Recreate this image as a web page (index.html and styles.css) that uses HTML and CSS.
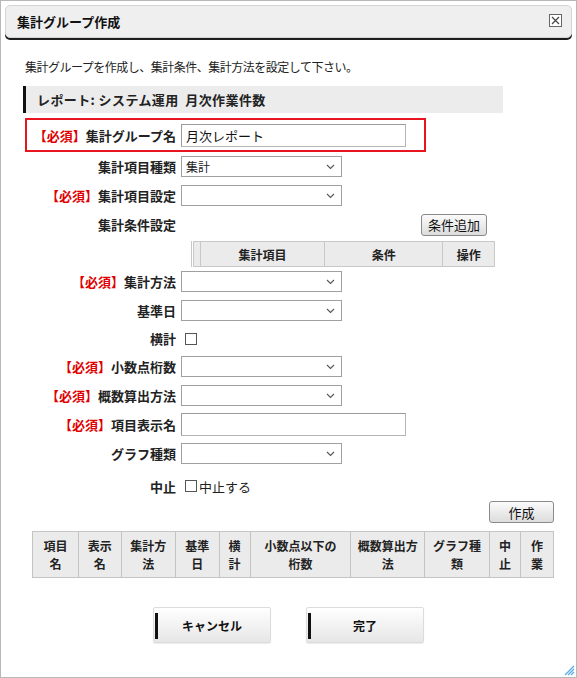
FILE: index.html
```html
<!DOCTYPE html>
<html lang="ja">
<head>
  <meta charset="UTF-8">
  <title>集計グループ作成</title>
  <link rel="stylesheet" href="styles.css">
</head>
<body>

  <!-- ダイアログ -->
  <div class="dialog">
    <div class="dialog-header">
      <span class="dialog-title">集計グループ作成</span>
      <span class="close-btn">
        <svg width="13" height="13" viewBox="0 0 13 13">
          <rect x="0.5" y="0.5" width="12" height="12" fill="#fff" stroke="#666"/>
          <path d="M3 3 L10 10 M10 3 L3 10" stroke="#444" stroke-width="1.2"/>
        </svg>
      </span>
    </div>

    <div class="dialog-body">
      <p class="lead">集計グループを作成し、集計条件、集計方法を設定して下さい。</p>

      <div class="report-bar">レポート: システム運用&nbsp;&nbsp;月次作業件数</div>

      <!-- 入力フォーム -->
      <div class="form">
        <div class="row row-focus">
          <label class="label"><span class="req">【必須】</span>集計グループ名</label>
          <input class="text-input" type="text" value="月次レポート">
        </div>

        <div class="row">
          <label class="label">集計項目種類</label>
          <span class="select"><span class="select-value">集計</span><svg class="chev" width="9" height="6" viewBox="0 0 9 6"><path d="M1 1 L4.5 4.5 L8 1" fill="none" stroke="#555" stroke-width="1.1"/></svg></span>
        </div>

        <div class="row">
          <label class="label"><span class="req">【必須】</span>集計項目設定</label>
          <span class="select"><span class="select-value"></span><svg class="chev" width="9" height="6" viewBox="0 0 9 6"><path d="M1 1 L4.5 4.5 L8 1" fill="none" stroke="#555" stroke-width="1.1"/></svg></span>
        </div>

        <div class="row">
          <label class="label">集計条件設定</label>
          <span class="spacer"></span>
          <button class="btn btn-add">条件追加</button>
        </div>

        <table class="cond-table">
          <tr>
            <th class="col-blank"></th>
            <th class="col-item">集計項目</th>
            <th class="col-cond">条件</th>
            <th class="col-op">操作</th>
          </tr>
        </table>

        <div class="row">
          <label class="label"><span class="req">【必須】</span>集計方法</label>
          <span class="select"><span class="select-value"></span><svg class="chev" width="9" height="6" viewBox="0 0 9 6"><path d="M1 1 L4.5 4.5 L8 1" fill="none" stroke="#555" stroke-width="1.1"/></svg></span>
        </div>

        <div class="row">
          <label class="label">基準日</label>
          <span class="select"><span class="select-value"></span><svg class="chev" width="9" height="6" viewBox="0 0 9 6"><path d="M1 1 L4.5 4.5 L8 1" fill="none" stroke="#555" stroke-width="1.1"/></svg></span>
        </div>

        <div class="row row-short">
          <label class="label">横計</label>
          <span class="check"></span>
        </div>

        <div class="row">
          <label class="label"><span class="req">【必須】</span>小数点桁数</label>
          <span class="select"><span class="select-value"></span><svg class="chev" width="9" height="6" viewBox="0 0 9 6"><path d="M1 1 L4.5 4.5 L8 1" fill="none" stroke="#555" stroke-width="1.1"/></svg></span>
        </div>

        <div class="row">
          <label class="label"><span class="req">【必須】</span>概数算出方法</label>
          <span class="select"><span class="select-value"></span><svg class="chev" width="9" height="6" viewBox="0 0 9 6"><path d="M1 1 L4.5 4.5 L8 1" fill="none" stroke="#555" stroke-width="1.1"/></svg></span>
        </div>

        <div class="row">
          <label class="label"><span class="req">【必須】</span>項目表示名</label>
          <input class="text-input" type="text" value="">
        </div>

        <div class="row">
          <label class="label">グラフ種類</label>
          <span class="select"><span class="select-value"></span><svg class="chev" width="9" height="6" viewBox="0 0 9 6"><path d="M1 1 L4.5 4.5 L8 1" fill="none" stroke="#555" stroke-width="1.1"/></svg></span>
        </div>

        <div class="row row-stop">
          <label class="label">中止</label>
          <span class="check"></span>
          <span class="check-text">中止する</span>
        </div>
      </div>

      <!-- 作成ボタン -->
      <div class="create-line">
        <button class="btn btn-create">作成</button>
      </div>

      <!-- 集計グループ一覧 -->
      <table class="summary-table">
        <tr>
          <th style="width:46px">項目<br>名</th>
          <th style="width:43px">表示<br>名</th>
          <th style="width:54px">集計方<br>法</th>
          <th style="width:44px">基準<br>日</th>
          <th style="width:31px">横<br>計</th>
          <th style="width:101px">小数点以下の<br>桁数</th>
          <th style="width:74px">概数算出方<br>法</th>
          <th style="width:65px">グラフ種<br>類</th>
          <th style="width:31px">中<br>止</th>
          <th style="width:33px">作<br>業</th>
        </tr>
      </table>

      <!-- 下部ボタン -->
      <div class="footer-buttons">
        <button class="big-btn">キャンセル</button>
        <button class="big-btn">完了</button>
      </div>
    </div>

    <svg class="grip" width="12" height="12" viewBox="0 0 12 12">
      <path d="M11 2 L2 11 M11 5 L5 11 M11 8 L8 11" stroke="#5aaae6" stroke-width="1.3"/>
    </svg>
  </div>

</body>
</html>
```

FILE: styles.css
```css
/* 全体 */
body {
  margin: 0;
  background-color: #ffffff;
  font-family: "Noto Sans CJK JP", "Liberation Sans", sans-serif;
  font-size: 12px;
  color: #222;
}

/* ダイアログ枠 */
.dialog {
  position: relative;
  width: 577px;
  height: 678px;
  border: 1px solid #b8b8b8;
  box-sizing: border-box;
  background-color: #fff;
}

/* ヘッダー */
.dialog-header {
  display: flex;
  align-items: center;
  justify-content: space-between;
  height: 33px;
  margin: 4px 4px 0 4px;
  padding: 0 9px 0 11px;
  border: 1px solid #d4d4d4;
  border-radius: 5px;
  background-color: #efefef;
  box-shadow: 0 2px 0 #1e1e1e;
  box-sizing: border-box;
}

.dialog-title {
  font-size: 13px;
  font-weight: bold;
  color: #111;
}

.close-btn {
  display: flex;
  margin-top: -2px;
}

/* 本文 */
.dialog-body {
  padding: 0 22px;
}

.lead {
  margin: 21px 0 0 2px;
  line-height: 16px;
  letter-spacing: -0.5px;
  color: #222;
}

.report-bar {
  width: 480px;
  height: 27px;
  margin-top: 11px;
  padding-left: 11px;
  border-left: 3px solid #111;
  background-color: #ececec;
  box-sizing: border-box;
  display: flex;
  align-items: center;
  font-weight: bold;
  font-size: 13px;
  letter-spacing: 0.4px;
}

/* フォーム */
.form {
  margin-top: 5px;
}

.row {
  display: flex;
  align-items: center;
  height: 29px;
  padding-left: 2px;
}

.row-short {
  height: 27px;
}

.row-stop {
  height: 32px;
  padding-top: 4px;
  box-sizing: border-box;
}

.row-focus {
  width: 401px;
  height: 34px;
  padding-left: 0;
  margin-left: 2px;
  border: 2px solid #e8141e;
  box-sizing: border-box;
}

.label {
  width: 151px;
  margin-right: 5px;
  text-align: right;
  font-size: 13px;
  font-weight: bold;
  color: #222;
  white-space: nowrap;
}

.row-focus .label {
  width: 149px;
}

.req {
  color: #e00000;
}

.text-input {
  width: 225px;
  height: 23px;
  padding: 0 4px;
  border: 1px solid #9a9a9a;
  border-right-color: #b5b5b5;
  border-bottom-color: #b5b5b5;
  box-sizing: border-box;
  font-family: inherit;
  font-size: 13px;
  color: #111;
  outline: none;
}

/* セレクト */
.select {
  position: relative;
  display: flex;
  align-items: center;
  width: 161px;
  height: 21px;
  padding-left: 4px;
  border: 1px solid #a0a0a0;
  box-sizing: border-box;
  background-color: #fff;
  font-size: 12px;
}

.chev {
  position: absolute;
  right: 6px;
  top: 7px;
}

.spacer {
  flex: 1;
}

/* ボタン */
.btn {
  height: 22px;
  padding: 0;
  border: 1px solid #8a8a8a;
  border-radius: 3px;
  background: linear-gradient(#fbfbfb, #dcdcdc);
  font-family: inherit;
  font-size: 13px;
  color: #111;
  white-space: nowrap;
  cursor: pointer;
}

.btn-add {
  width: 66px;
  margin-right: 67px;
}

.btn-create {
  width: 65px;
}

/* 条件テーブル */
.cond-table {
  margin: 2px 0 0 168px;
  border-collapse: collapse;
  width: 304px;
}

.cond-table th {
  height: 25px;
  padding: 0;
  border: 1px solid #c8c8c8;
  background-color: #ebebeb;
  font-size: 12px;
  font-weight: bold;
  box-sizing: border-box;
}

.col-blank {
  width: 8px;
  border-left: 3px double #c8c8c8 !important;
}

.col-item { width: 125px; }
.col-cond { width: 119px; }
.col-op { width: 52px; }

/* チェックボックス */
.check {
  width: 12px;
  height: 12px;
  margin-left: 4px;
  border: 1px solid #555;
  box-sizing: border-box;
  background-color: #fff;
}

.check-text {
  margin-left: 2px;
  font-size: 13px;
}

/* 作成 */
.create-line {
  display: flex;
  justify-content: flex-end;
  margin-top: 1px;
}

/* 一覧テーブル */
.summary-table {
  margin: 8px 0 0 9px;
  border-collapse: collapse;
  width: 522px;
}

.summary-table th {
  height: 46px;
  padding: 0;
  border: 1px solid #c4c4c4;
  background-color: #ebebeb;
  font-size: 12px;
  font-weight: bold;
  line-height: 18px;
  box-sizing: border-box;
}

/* 下部ボタン */
.footer-buttons {
  display: flex;
  justify-content: center;
  gap: 35px;
  margin-top: 29px;
}

.big-btn {
  position: relative;
  width: 118px;
  height: 36px;
  border: 1px solid #dcdcdc;
  border-radius: 2px;
  background: linear-gradient(#ffffff, #e6e6e6);
  box-shadow: 0 1px 1px rgba(0, 0, 0, 0.08);
  font-family: inherit;
  font-size: 12px;
  font-weight: bold;
  color: #111;
  cursor: pointer;
}

.big-btn::before {
  content: "";
  position: absolute;
  left: 1px;
  top: 5px;
  width: 3px;
  height: 26px;
  background-color: #111;
}

.grip {
  position: absolute;
  right: 1px;
  bottom: 1px;
}
```
